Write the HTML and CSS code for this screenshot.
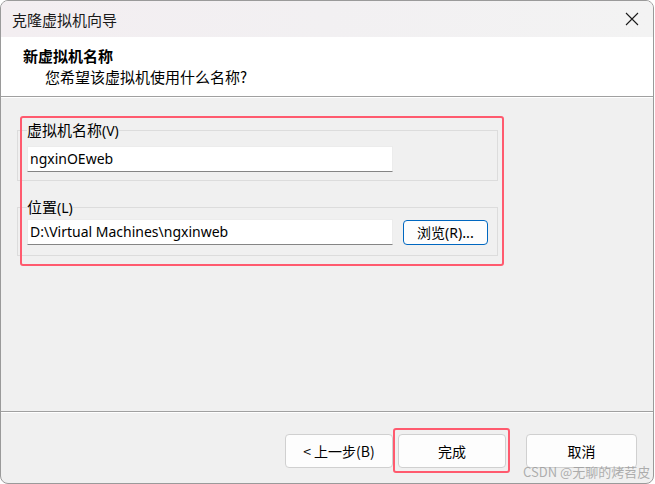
FILE: index.html
```html
<!DOCTYPE html>
<html lang="zh-CN">
<head>
    <meta charset="UTF-8">
    <title>克隆虚拟机向导</title>
    <link rel="stylesheet" href="styles.css">
</head>
<body>
    <div class="window">
        <div class="titlebar">
            <span class="title">克隆虚拟机向导</span>
            <svg class="close" width="14" height="14" viewBox="0 0 14 14">
                <path d="M1 1 L13 13 M13 1 L1 13" stroke="#1a1a1a" stroke-width="1.1" fill="none"/>
            </svg>
        </div>

        <div class="header">
            <div class="header-title">新虚拟机名称</div>
            <div class="header-sub">您希望该虚拟机使用什么名称?</div>
        </div>
        <div class="sep"></div>

        <div class="content">
            <fieldset class="group group-name">
                <legend>虚拟机名称<span class="key">(V)</span></legend>
                <div class="row">
                    <div class="input">ngxinOEweb</div>
                </div>
            </fieldset>

            <fieldset class="group group-path">
                <legend>位置<span class="key">(L)</span></legend>
                <div class="row">
                    <div class="input">D:\Virtual Machines\ngxinweb</div>
                    <button class="btn browse">浏览<span class="key">(R)</span>...</button>
                </div>
            </fieldset>

            <!-- 注释用の赤枠 -->
            <div class="mark mark-groups"></div>
        </div>

        <div class="sep"></div>
        <div class="footer">
            <button class="btn">&lt; 上一步(B)</button>
            <button class="btn finish">完成</button>
            <button class="btn cancel">取消</button>
            <div class="mark mark-finish"></div>
            <span class="watermark">CSDN @无聊的烤苕皮</span>
        </div>
    </div>
</body>
</html>
```

FILE: styles.css
```css
* {
    box-sizing: border-box;
    margin: 0;
    padding: 0;
}

body {
    width: 655px;
    height: 484px;
    background: #ffffff;
    font-family: "Noto Sans", "Noto Sans CJK SC", sans-serif;
    color: #000;
    overflow: hidden;
}

.window {
    width: 654px;
    height: 484px;
    border: 1px solid #9a9a9a;
    border-radius: 8px;
    background: #f0f0f0;
    overflow: hidden;
    display: flex;
    flex-direction: column;
}

.titlebar {
    height: 36px;
    flex-shrink: 0;
    display: flex;
    justify-content: space-between;
    align-items: center;
    padding: 0 14px 0 11px;
    background: linear-gradient(90deg, #f3eef1 0%, #f2f0f2 50%, #f3f3f3 100%);
}

.title {
    font-family: "Noto Sans CJK SC", sans-serif;
    font-size: 15px;
    color: #1a1a1a;
}

.header {
    height: 59px;
    flex-shrink: 0;
    background: #ffffff;
    padding: 8px 0 0 22px;
    font-family: "Noto Sans CJK SC", sans-serif;
    font-size: 15px;
    line-height: 21px;
}

.header-title {
    font-weight: bold;
}

.header-sub {
    padding-left: 22px;
}

.sep {
    height: 2px;
    flex-shrink: 0;
    border-top: 1px solid #a0a0a0;
    border-bottom: 1px solid #ffffff;
}

.content {
    position: relative;
    flex: 1;
    padding: 22px 155px 0 16px;
}

.group {
    border: 1px solid #dcdcdc;
    padding: 0 0 0 9px;
}

.group legend {
    font-family: "Noto Sans CJK SC", sans-serif;
    font-size: 15px;
    line-height: 20px;
    padding: 0;
    color: #000;
}

.key {
    font-family: "Noto Sans", sans-serif;
    font-size: 14px;
}

.group-name {
    padding-top: 5px;
    padding-bottom: 8px;
}

.group-path {
    margin-top: 16px;
    padding-top: 1px;
    padding-bottom: 10px;
}

.row {
    display: flex;
    align-items: center;
    gap: 10px;
}

.input {
    width: 366px;
    height: 26px;
    background: #ffffff;
    border: 1px solid #ececec;
    border-bottom: 1px solid #858585;
    padding: 2px 0 0 2px;
    font-family: "Noto Sans", sans-serif;
    font-size: 14px;
    line-height: 20px;
    color: #000;
}

.btn {
    font-family: "Noto Sans CJK SC", sans-serif;
    font-size: 14px;
    background: #fdfdfd;
    border: 1px solid #d0d0d0;
    border-radius: 4px;
    color: #000;
    height: 34px;
}

.browse {
    width: 85px;
    height: 25px;
    border-color: #0067c0;
    line-height: 20px;
}

.footer {
    position: relative;
    height: 70px;
    flex-shrink: 0;
    display: flex;
    align-items: flex-start;
    padding: 21px 0 0 284px;
}

.footer .btn {
    width: 108px;
}

.footer .finish {
    margin-left: 5px;
}

.footer .cancel {
    width: 111px;
    margin-left: 20px;
}

.mark {
    position: absolute;
    border: 2px solid #ff5a6e;
    border-radius: 3px;
}

.mark-groups {
    left: 19px;
    top: 18px;
    width: 484px;
    height: 150px;
}

.mark-finish {
    left: 392px;
    top: 15px;
    width: 117px;
    height: 45px;
}

.watermark {
    position: absolute;
    left: 522px;
    top: 49px;
    font-family: "Noto Sans CJK SC", sans-serif;
    font-size: 13px;
    color: rgba(150, 150, 150, 0.75);
}
```
